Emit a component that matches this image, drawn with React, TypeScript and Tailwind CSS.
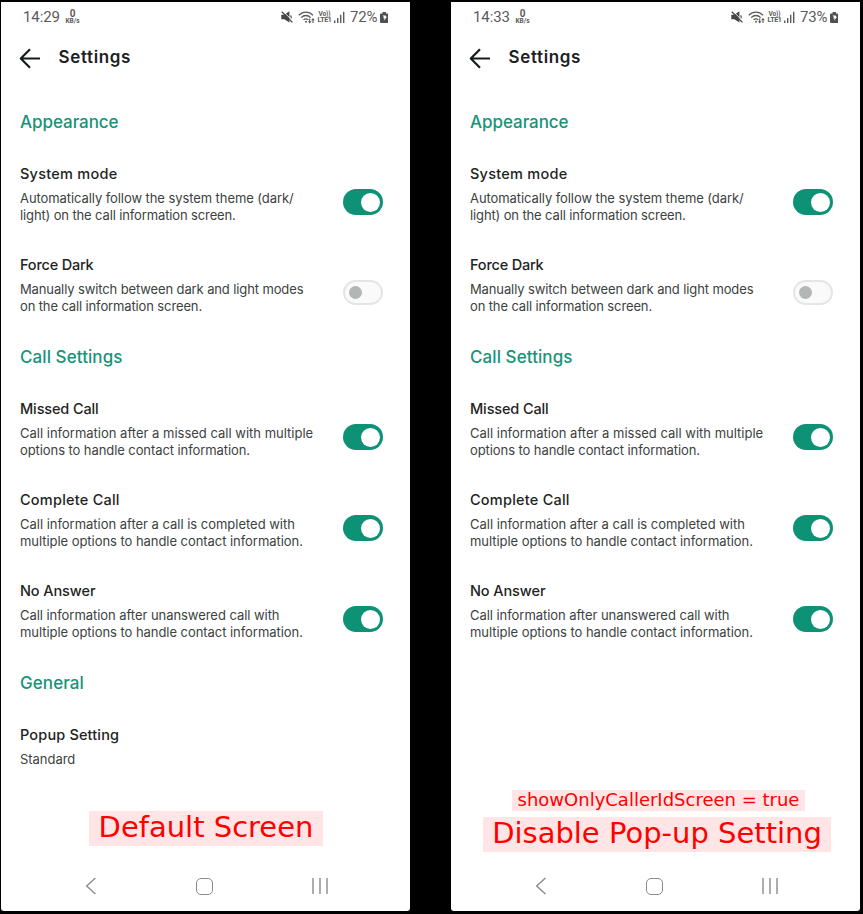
import React from "react";

type Line = { text: string; track: string };
type Setting = { title: Line; lines: Line[]; on: boolean | null };
type Section = { heading: Line; settings: Setting[] };

const appearance: Section = {
  heading: { text: "Appearance", track: "tracking-[-0.05px]" },
  settings: [
    {
      title: { text: "System mode", track: "tracking-[0.25px]" },
      on: true,
      lines: [
        { text: "Automatically follow the system theme (dark/", track: "tracking-[-0.08px]" },
        { text: "light) on the call information screen.", track: "tracking-[-0.13px]" },
      ],
    },
    {
      title: { text: "Force Dark", track: "tracking-[-0.2px]" },
      on: false,
      lines: [
        { text: "Manually switch between dark and light modes", track: "tracking-[-0.12px]" },
        { text: "on the call information screen.", track: "tracking-[-0.13px]" },
      ],
    },
  ],
};

const calls: Section = {
  heading: { text: "Call Settings", track: "tracking-[0.08px]" },
  settings: [
    {
      title: { text: "Missed Call", track: "tracking-[-0.13px]" },
      on: true,
      lines: [
        { text: "Call information after a missed call with multiple", track: "tracking-[0px]" },
        { text: "options to handle contact information.", track: "tracking-[-0.08px]" },
      ],
    },
    {
      title: { text: "Complete Call", track: "tracking-[0.23px]" },
      on: true,
      lines: [
        { text: "Call information after a call is completed with", track: "tracking-[-0.02px]" },
        { text: "multiple options to handle contact information.", track: "tracking-[-0.05px]" },
      ],
    },
    {
      title: { text: "No Answer", track: "tracking-[-0.1px]" },
      on: true,
      lines: [
        { text: "Call information after unanswered call with", track: "tracking-[-0.05px]" },
        { text: "multiple options to handle contact information.", track: "tracking-[-0.05px]" },
      ],
    },
  ],
};

const general: Section = {
  heading: { text: "General", track: "tracking-[0.08px]" },
  settings: [
    {
      title: { text: "Popup Setting", track: "tracking-[0.15px]" },
      on: null,
      lines: [{ text: "Standard", track: "tracking-[-0.03px]" }],
    },
  ],
};

function Toggle({ on }: { on: boolean }) {
  return on ? (
    <span className="flex h-[26px] w-10 items-center justify-end rounded-full bg-[#0d9276] pr-[3px]">
      <span className="size-[19px] rounded-full bg-white" />
    </span>
  ) : (
    <span className="flex h-[25px] w-10 items-center rounded-full border-2 border-[#e4e5e5] bg-[#fafafa] pl-[4px]">
      <span className="size-[12.5px] rounded-full bg-[#b2b6b5]" />
    </span>
  );
}

function StatusBar({ time, battery }: { time: string; battery: string }) {
  return (
    <div className="flex h-[30px] shrink-0 items-center pr-[22px] pl-[22px] font-[Roboto,sans-serif] text-[#5b5b5b]">
      <span className="w-[42px] pt-px text-[15px] leading-none tracking-[-0.1px]">{time}</span>
      <span className="flex w-[15px] flex-col items-center">
        <span className="text-[10px] leading-[9px] font-bold">0</span>
        <span className="text-[6.5px] leading-[7px] font-bold whitespace-nowrap">KB/s</span>
      </span>
      <span className="flex-1" />
      <svg className="mr-[5px] h-3 w-3" viewBox="0 0 12 12" fill="#454545">
        <path d="M0.3 3.8h3L8.4 0.2v11.4L3.3 8.2h-3z" />
        <path d="M2 0.3 12 10.3" stroke="#fff" strokeWidth="1" />
        <path d="M0.8 0.8 11.4 11.4" stroke="#454545" strokeWidth="1.3" />
        <path d="M9.6 4.4c.8 1 .8 2 .4 3" stroke="#454545" strokeWidth="1.1" fill="none" />
      </svg>
      <svg className="h-[13px] w-[18px]" viewBox="0 0 18 13" fill="none" stroke="#5b5b5b" strokeWidth="1.3">
        <path d="M0.8 4.2C4.8 0 11 0 15 4.2M3.2 6.6c2.7-2.8 6.7-2.8 9.4 0M5.5 8.9c1.5-1.5 3.4-1.5 4.8 0" />
        <circle cx="8" cy="10.8" r="1" fill="#5b5b5b" stroke="none" />
        <path d="M11.7 7.6v3.4M15 12V8.5" strokeWidth="1.1" />
        <path d="M9.9 10.2h3.6L11.7 12.6zM13.2 9.3h3.6L15 6.9z" fill="#5b5b5b" stroke="none" />
      </svg>
      <span className="ml-px flex w-[15px] flex-col items-center">
        <span className="text-[6.5px] leading-[6px] font-bold tracking-[-0.1px]">Vo))</span>
        <span className="text-[7px] leading-[7px] font-bold tracking-[-0.3px]">LTE1</span>
      </span>
      <svg className="ml-[2px] h-3 w-[11px]" viewBox="0 0 11 12" fill="#5b5b5b">
        <path d="M0 9.5h1.4V12H0zM3 7h1.4v5H3zM6 3.8h1.4V12H6zM9 0.8h1.4V12H9z" />
      </svg>
      <span className="ml-[5px] w-[29.5px] pt-px text-[15px] leading-none tracking-[-0.2px]">{battery}</span>
      <svg className="mt-px h-[11px] w-[8.5px]" viewBox="0 0 8.5 11">
        <path d="M2.6 0h3.3v1.4h1.8l.8.8v8l-.8.8H.8l-.8-.8v-8l.8-.8h1.8z" fill="#505050" />
        <path d="M2.5 3.6h3.2l1 1.6-2.5 3.4.2-2.4H3l1-1.2z" fill="#fff" />
      </svg>
    </div>
  );
}

function SettingRow({ setting }: { setting: Setting }) {
  return (
    <div className="flex h-[91px] items-start justify-between">
      <div className="whitespace-nowrap">
        <div className={`mb-[5.5px] h-5 text-[14.5px] leading-5 font-medium text-[#1e2422] ${setting.title.track}`}>
          {setting.title.text}
        </div>
        {setting.lines.map((line) => (
          <div key={line.text} className={`h-[17.5px] text-[13px] leading-[17.5px] text-[#3c4240] ${line.track}`}>
            {line.text}
          </div>
        ))}
      </div>
      {setting.on !== null && (
        <div className="mt-[25px]">
          <Toggle on={setting.on} />
        </div>
      )}
    </div>
  );
}

function SectionBlock({ section }: { section: Section }) {
  return (
    <section className="mb-px">
      <h2 className={`h-[52px] text-[17px] leading-5 font-medium text-[#169478] ${section.heading.track}`}>
        {section.heading.text}
      </h2>
      {section.settings.map((setting) => (
        <SettingRow key={setting.title.text} setting={setting} />
      ))}
    </section>
  );
}

function NavBar() {
  return (
    <div className="flex h-[50px] shrink-0 items-center justify-between pr-[82px] pl-[84px]">
      <svg className="h-[18px] w-3" viewBox="0 0 12 18" fill="none" stroke="#8b8b8b" strokeWidth="1.4">
        <path d="M10.4 1 1.7 9l8.7 8" />
      </svg>
      <span className="size-[17px] rounded-[5px] border-[1.5px] border-[#8b8b8b]" />
      <svg className="h-4 w-4" viewBox="0 0 16 16" fill="none" stroke="#8b8b8b" strokeWidth="1.4">
        <path d="M1 0v16M8 0v16M15 0v16" />
      </svg>
    </div>
  );
}

type PhoneProps = { time: string; battery: string; sections: Section[]; children: React.ReactNode };

function Phone({ time, battery, sections, children }: PhoneProps) {
  return (
    <div className="flex h-[909px] w-[409px] flex-col rounded-b-[3px] bg-white">
      <StatusBar time={time} battery={battery} />
      <header className="flex h-[50px] shrink-0 items-center pl-[18px]">
        <svg className="mt-[2px] h-[21px] w-[22px]" viewBox="0 0 22 21" fill="none" stroke="#171d1b" strokeWidth="2.2" strokeLinejoin="round">
          <path d="M21 10.5H2M11 1.2 1.8 10.5 11 19.8" />
        </svg>
        <h1 className="ml-[17.5px] text-[17px] leading-6 font-semibold tracking-[0.65px] text-[#1b211f]">Settings</h1>
      </header>
      <main className="min-h-0 flex-1 pt-[30px] pr-[27px] pl-[19px]">
        {sections.map((section) => (
          <SectionBlock key={section.heading.text} section={section} />
        ))}
      </main>
      {children}
      <NavBar />
    </div>
  );
}

export default function App() {
  return (
    <div className="flex h-[914px] w-[863px] gap-[41px] overflow-hidden bg-black pt-[2px] pl-px font-[Inter,sans-serif]">
      <Phone time="14:29" battery="72%" sections={[appearance, calls, general]}>
        <div className="mb-[15px] ml-[88px] flex h-[35px] w-[234px] shrink-0 items-center justify-center bg-[#ffe5e5] pb-[3px] font-['DejaVu_Sans',sans-serif] text-[29px] leading-none whitespace-nowrap text-[#ff0000]">
          Default Screen
        </div>
      </Phone>
      <Phone time="14:33" battery="73%" sections={[appearance, calls]}>
        <div className="mb-[9px] shrink-0 font-['DejaVu_Sans',sans-serif] whitespace-nowrap text-[#ff0000]">
          <div className="mb-[6px] ml-[61px] flex h-[21px] w-[293px] items-center justify-center bg-[#ffe5e5] pb-[2px] text-[18px] leading-none">
            showOnlyCallerIdScreen = true
          </div>
          <div className="ml-[32px] flex h-[35px] w-[348px] items-center justify-center bg-[#ffe5e5] pb-[3px] text-[29px] leading-none">
            Disable Pop-up Setting
          </div>
        </div>
      </Phone>
    </div>
  );
}
